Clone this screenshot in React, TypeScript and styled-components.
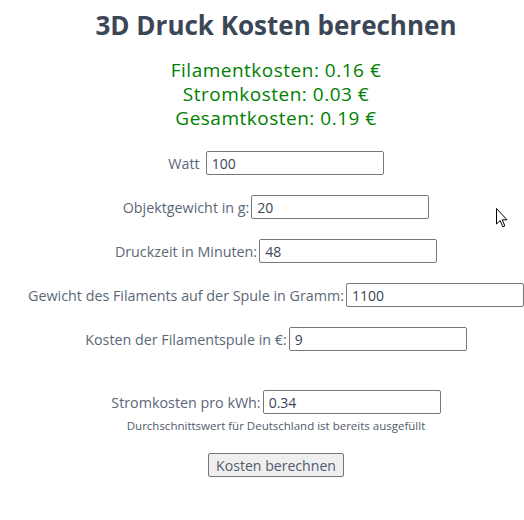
import React from "react";
import styled, { createGlobalStyle } from "styled-components";

const Global = createGlobalStyle`
  html, body { margin: 0; padding: 0; background: #fff; overflow: hidden; }
  body { font-family: "Open Sans", "Liberation Sans", sans-serif; }
`;

const Page = styled.div`
  position: relative;
  width: 552px;
  display: flex;
  flex-direction: column;
  align-items: center;
  padding-top: 8px;
`;

const Title = styled.h1`
  margin: 0;
  font-size: 26px;
  font-weight: 700;
  line-height: 34px;
  color: #3b4656;
`;

const Results = styled.div`
  margin-top: 16px;
  display: flex;
  flex-direction: column;
  align-items: center;
  color: #008000;
  font-size: 19px;
  letter-spacing: 0.5px;
  line-height: 24px;
`;

const Form = styled.form`
  margin-top: 21px;
  display: flex;
  flex-direction: column;
  align-items: center;
`;

const Row = styled.div<{ $top?: number }>`
  display: flex;
  align-items: center;
  justify-content: center;
  height: 24px;
  margin-top: ${(p) => p.$top ?? 20}px;
  white-space: nowrap;
`;

const Label = styled.label<{ $gap?: number }>`
  font-size: 14.3px;
  color: #5b6779;
  margin-right: ${(p) => p.$gap ?? 2}px;
`;

const Input = styled.input`
  box-sizing: border-box;
  width: 178px;
  height: 24px;
  margin: 0;
  padding: 0 5px;
  border: 1px solid #767676;
  border-radius: 2px;
  font-family: "Open Sans", "Liberation Sans", sans-serif;
  font-size: 14px;
  color: #3b4656;
  background: #fff;
  outline: none;
`;

const Note = styled.div`
  margin-top: 5px;
  font-size: 11.5px;
  line-height: 14px;
  color: #4f5b6c;
`;

const Button = styled.button`
  margin-top: 20px;
  box-sizing: border-box;
  height: 24px;
  padding: 0 7px;
  border: 1px solid #767676;
  border-radius: 2px;
  background: #efefef;
  font-family: "Open Sans", "Liberation Sans", sans-serif;
  font-size: 14.1px;
  color: #4f5b6c;
`;

const Pointer = styled.svg`
  position: absolute;
  left: 496px;
  top: 208px;
  width: 12px;
  height: 20px;
`;

const fields = [
  { label: "Watt", value: "100", gap: 6 },
  { label: "Objektgewicht in g:", value: "20" },
  { label: "Druckzeit in Minuten:", value: "48" },
  { label: "Gewicht des Filaments auf der Spule in Gramm:", value: "1100" },
  { label: "Kosten der Filamentspule in €:", value: "9" },
];

export default function App() {
  return (
    <>
      <Global />
      <Page>
        <Title>3D Druck Kosten berechnen</Title>
        <Results>
          <div>Filamentkosten: 0.16 €</div>
          <div>Stromkosten: 0.03 €</div>
          <div>Gesamtkosten: 0.19 €</div>
        </Results>
        <Form onSubmit={(e) => e.preventDefault()}>
          {fields.map((f, i) => (
            <Row key={f.label} $top={i === 0 ? 0 : 20}>
              <Label $gap={f.gap}>{f.label}</Label>
              <Input defaultValue={f.value} />
            </Row>
          ))}
          <Row $top={39}>
            <Label>Stromkosten pro kWh:</Label>
            <Input defaultValue="0.34" />
          </Row>
          <Note>Durchschnittswert für Deutschland ist bereits ausgefüllt</Note>
          <Button type="submit">Kosten berechnen</Button>
        </Form>
        <Pointer viewBox="0 0 12 20">
          <path
            d="M0.5 0.5 L0.5 16 L4.2 12.6 L6.8 18.8 L8.8 18 L6.3 11.8 L11 11.8 Z"
            fill="#fff"
            stroke="#000"
            strokeWidth="1"
            strokeLinejoin="miter"
          />
        </Pointer>
      </Page>
    </>
  );
}
